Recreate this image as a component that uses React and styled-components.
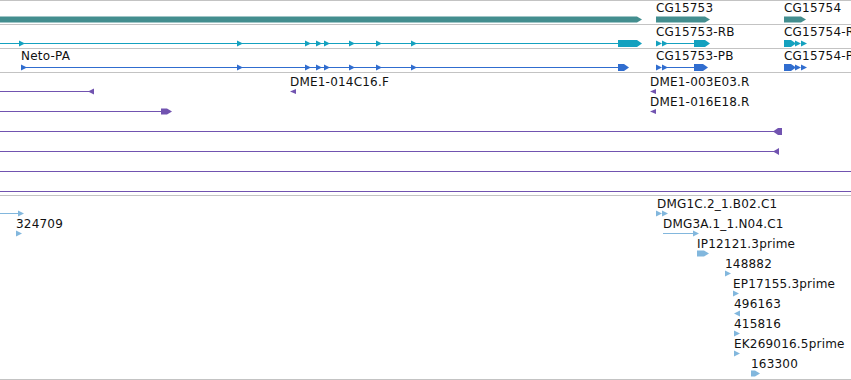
import React from 'react';
import styled, { createGlobalStyle } from 'styled-components';

const GlobalStyle = createGlobalStyle`
  html, body {
    margin: 0;
    padding: 0;
    background: #fff;
  }
  body {
    font-family: "DejaVu Sans", "Liberation Sans", sans-serif;
    overflow: hidden;
  }
`;

// each track: a colour, row height, where the glyph line sits in a row, and its rows
// shapes: ['line', x1, x2] | ['r', x] | ['l', tipX] | ['box', x1, x2] | ['lbox', x1, x2]
const TRACKS = [
  {
    color: '#438e8f',
    pad: 0,
    rowH: 23,
    gy: 18,
    rows: [
      {
        labels: [[656, 'CG15753'], [784, 'CG15754']],
        shapes: [['box', 0, 642], ['box', 656, 710], ['box', 784, 806]],
      },
    ],
  },
  {
    color: '#14a1bf',
    pad: 0,
    rowH: 23,
    gy: 18,
    rows: [
      {
        labels: [[656, 'CG15753-RB'], [784, 'CG15754-RB']],
        shapes: [
          ['line', 0, 640],
          ['r', 19], ['r', 237], ['r', 305], ['r', 316], ['r', 324], ['r', 349], ['r', 376], ['r', 411],
          ['box', 618, 642, 7],
          ['r', 656], ['r', 662], ['line', 662, 696], ['box', 694, 710, 7],
          ['box', 784, 796, 7], ['r', 795], ['r', 801],
        ],
      },
    ],
  },
  {
    color: '#306dcf',
    pad: 0,
    rowH: 23,
    gy: 18,
    rows: [
      {
        labels: [[21, 'Neto-PA'], [656, 'CG15753-PB'], [784, 'CG15754-PB']],
        shapes: [
          ['line', 21, 624],
          ['r', 21], ['r', 237], ['r', 305], ['r', 316], ['r', 324], ['r', 349], ['r', 376], ['r', 411],
          ['box', 618, 629, 7],
          ['r', 656], ['r', 662], ['line', 662, 696], ['box', 694, 708, 7],
          ['box', 784, 796, 7], ['r', 795], ['r', 801],
        ],
      },
    ],
  },
  {
    color: '#7153b0',
    pad: 2,
    rowH: 20,
    gy: 16,
    rows: [
      {
        labels: [[290, 'DME1-014C16.F'], [650, 'DME1-003E03.R']],
        shapes: [['line', 0, 90], ['l', 88], ['l', 290, 5], ['l', 650, 5]],
      },
      {
        labels: [[650, 'DME1-016E18.R']],
        shapes: [['line', 0, 162], ['box', 161, 172, 6], ['l', 650, 5]],
      },
      { labels: [], shapes: [['line', 0, 775], ['lbox', 773, 782, 7]] },
      { labels: [], shapes: [['line', 0, 775], ['l', 773, 7]] },
      { labels: [], shapes: [['line', 0, 851]] },
      { labels: [], shapes: [['line', 0, 851]] },
    ],
  },
  {
    color: '#82b7dd',
    pad: 1,
    rowH: 20,
    gy: 16,
    rows: [
      {
        labels: [[657, 'DMG1C.2_1.B02.C1']],
        shapes: [['line', 0, 20], ['r', 18], ['r', 656], ['r', 662]],
      },
      {
        labels: [[16, '324709'], [663, 'DMG3A.1_1.N04.C1']],
        shapes: [['r', 16], ['line', 663, 695], ['r', 693]],
      },
      { labels: [[697, 'IP12121.3prime']], shapes: [['box', 697, 709, 6]] },
      { labels: [[725, '148882']], shapes: [['r', 725]] },
      { labels: [[733, 'EP17155.3prime']], shapes: [['r', 733]] },
      { labels: [[734, '496163']], shapes: [['l', 734]] },
      { labels: [[734, '415816']], shapes: [['r', 734]] },
      { labels: [[734, 'EK269016.5prime']], shapes: [['r', 734]] },
      { labels: [[751, '163300']], shapes: [['box', 751, 760, 6]] },
    ],
  },
];

const Browser = styled.div`
  width: 851px;
  height: 380px;
  border-top: 1px solid #c3c3c3;
  box-sizing: border-box;
  display: flex;
  flex-direction: column;
  overflow: hidden;
`;

const Track = styled.div`
  display: flex;
  flex-direction: column;
  flex: ${(p) => (p.$fill ? '1 1 auto' : '0 0 auto')};
  padding-top: ${(p) => p.$pad}px;
  border-bottom: 1px solid #c3c3c3;
`;

const Row = styled.div`
  position: relative;
  height: ${(p) => p.$h}px;
  flex: 0 0 auto;
`;

const Glyphs = styled.svg`
  position: absolute;
  left: 0;
  top: 0;
  width: 851px;
  height: 100%;
  overflow: visible;
`;

const Label = styled.span`
  position: absolute;
  top: 0;
  font-size: 12px;
  line-height: 14px;
  letter-spacing: 0.2px;
  color: #111;
  white-space: nowrap;
`;

function Shape({ s, gy, color }) {
  const [kind, a, b, size] = s;
  const cy = gy + 0.5;
  if (kind === 'line') {
    return <line x1={a} x2={b} y1={cy} y2={cy} stroke={color} strokeWidth="1" />;
  }
  if (kind === 'r') {
    const h = (b || 6) / 2;
    return <polygon points={`${a},${cy - h} ${a + 6},${cy} ${a},${cy + h}`} fill={color} />;
  }
  if (kind === 'l') {
    const h = (b || 6) / 2;
    return <polygon points={`${a},${cy} ${a + 6},${cy - h} ${a + 6},${cy + h}`} fill={color} />;
  }
  const h = size || 6;
  const top = gy + 0.5 - h / 2;
  const bot = top + h;
  if (kind === 'box') {
    return (
      <polygon
        points={`${a},${top} ${b - 5},${top} ${b},${cy} ${b - 5},${bot} ${a},${bot}`}
        fill={color}
      />
    );
  }
  return (
    <polygon
      points={`${a},${cy} ${a + 5},${top} ${b},${top} ${b},${bot} ${a + 5},${bot}`}
      fill={color}
    />
  );
}

function FeatureRow({ row, track }) {
  return (
    <Row $h={track.rowH}>
      <Glyphs>
        {row.shapes.map((s, i) => (
          <Shape key={i} s={s} gy={track.gy} color={track.color} />
        ))}
      </Glyphs>
      {row.labels.map(([x, text]) => (
        <Label key={text} style={{ left: x }}>
          {text}
        </Label>
      ))}
    </Row>
  );
}

export default function App() {
  return (
    <>
      <GlobalStyle />
      <Browser>
        {TRACKS.map((track, i) => (
          <Track key={i} $pad={track.pad} $fill={i === TRACKS.length - 1}>
            {track.rows.map((row, j) => (
              <FeatureRow key={j} row={row} track={track} />
            ))}
          </Track>
        ))}
      </Browser>
    </>
  );
}
